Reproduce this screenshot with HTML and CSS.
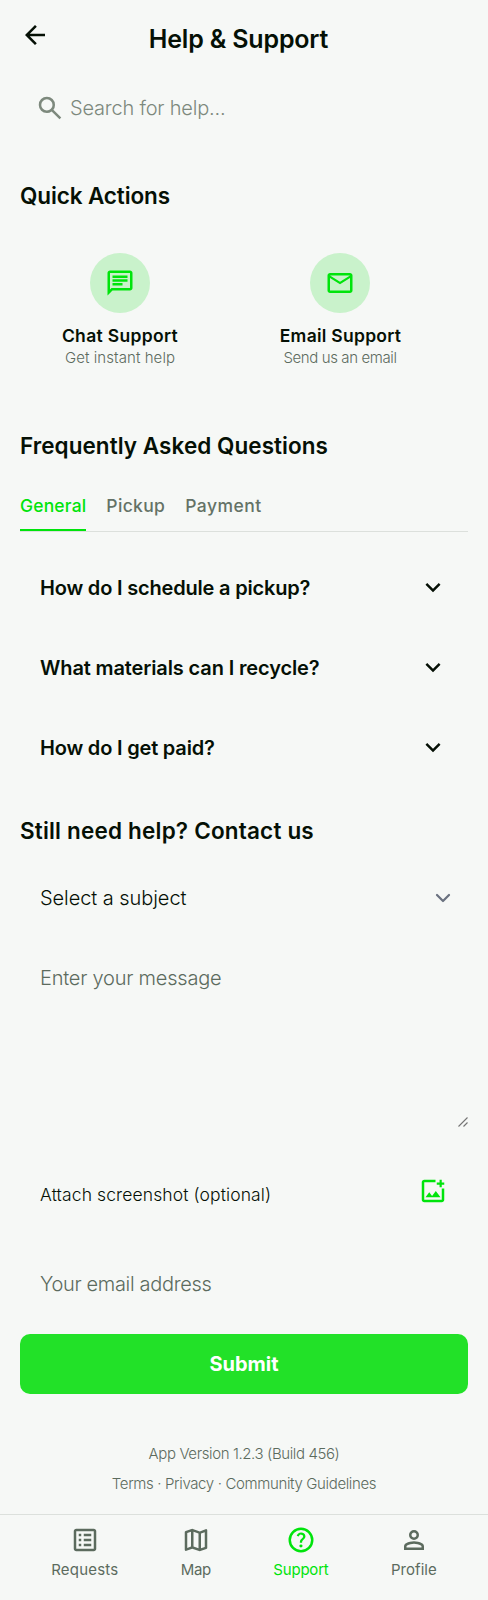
FILE: index.html
```html
<!DOCTYPE html>
<html lang="en">
<head>
<meta charset="utf-8">
<meta name="viewport" content="width=device-width, initial-scale=1">
<title>Help &amp; Support</title>
<link rel="stylesheet" href="styles.css">
</head>
<body>
<header class="header">
  <svg class="icon" viewBox="0 0 24 24"><path d="m7.85 13 5.6 5.6L12 20l-8-8 8-8 1.45 1.4L7.85 11H20v2z"/></svg>
  <h1 class="title">Help &amp; Support</h1>
</header>
<main class="main">
  <div class="search">
    <svg class="icon" viewBox="0 0 24 24"><path d="M19.6 21l-6.3-6.3A6.1 6.1 0 0 1 9.5 16q-2.73 0-4.61-1.89T3 9.5t1.89-4.61T9.5 3t4.61 1.89T16 9.5a6.1 6.1 0 0 1-1.3 3.8l6.3 6.3zM9.5 14q1.88 0 3.19-1.31T14 9.5t-1.31-3.19T9.5 5 6.31 6.31 5 9.5t1.31 3.19T9.5 14"/></svg>
    <span class="search-text">Search for help...</span>
  </div>

  <h2 class="heading quick">Quick Actions</h2>
  <div class="actions">
    <div class="action">
      <div class="bubble"><svg class="icon" viewBox="0 0 24 24"><path d="M6 14h8v-2H6zm0-3h12V9H6zm0-3h12V6H6zM2 22V4q0-.82.59-1.41T4 2h16q.82 0 1.41.59T22 4v12q0 .82-.59 1.41T20 18H6zm3.15-6H20V4H4v13.13z"/></svg></div>
      <div class="action-name">Chat Support</div>
      <div class="action-note">Get instant help</div>
    </div>
    <div class="action">
      <div class="bubble"><svg class="icon" viewBox="0 0 24 24"><path d="M4 20q-.82 0-1.41-.59T2 18V6q0-.82.59-1.41T4 4h16q.82 0 1.41.59T22 6v12q0 .82-.59 1.41T20 20zm8-7L4 8v10h16V8zm0-2 8-5H4zM4 8V6v12z"/></svg></div>
      <div class="action-name email-name">Email Support</div>
      <div class="action-note email-note">Send us an email</div>
    </div>
  </div>

  <h2 class="heading faq">Frequently Asked Questions</h2>
  <nav class="tabs">
    <a class="tab active">General</a>
    <a class="tab pickup">Pickup</a>
    <a class="tab payment">Payment</a>
  </nav>
  <div class="questions">
    <div class="question"><span>How do I schedule a pickup?</span><svg class="icon" viewBox="0 0 24 24"><path d="m12 15.4-6-6L7.4 8l4.6 4.6L16.6 8 18 9.4z"/></svg></div>
    <div class="question materials"><span>What materials can I recycle?</span><svg class="icon" viewBox="0 0 24 24"><path d="m12 15.4-6-6L7.4 8l4.6 4.6L16.6 8 18 9.4z"/></svg></div>
    <div class="question"><span>How do I get paid?</span><svg class="icon" viewBox="0 0 24 24"><path d="m12 15.4-6-6L7.4 8l4.6 4.6L16.6 8 18 9.4z"/></svg></div>
  </div>

  <h2 class="heading contact">Still need help? Contact us</h2>
  <form class="form">
    <div class="field select"><span>Select a subject</span><svg class="caret" viewBox="0 0 20 20"><path d="m6 8 4 4 4-4"/></svg></div>
    <div class="message-box">
      <textarea class="message" placeholder="Enter your message"></textarea>
      <svg class="grip" viewBox="0 0 10 10"><path d="M.5 9.5l9-9M5.5 9.5l4-4"/></svg>
    </div>
    <div class="attach">
      <span>Attach screenshot (optional)</span>
      <svg class="icon green" viewBox="0 0 24 24"><path d="M5 21q-.82 0-1.41-.59T3 19V5q0-.82.59-1.41T5 3h9v2H5v14h14v-9h2v9q0 .82-.59 1.41T19 21zM17.25 9V7H15V5.25h2.25V3H19v2.25h2V7h-2v2zM6 17h12l-3.75-5-3 4L9 13z"/></svg>
    </div>
    <div class="field email">Your email address</div>
    <button class="submit" type="button">Submit</button>
  </form>
</main>
<footer class="footer">
  <div class="version">App Version 1.2.3 (Build 456)</div>
  <div class="links">Terms · Privacy · Community Guidelines</div>
</footer>
<nav class="bottom-nav">
  <a class="nav-item requests"><svg class="icon" viewBox="0 0 24 24"><path d="M11 17h6v-2h-6zm0-4h6v-2h-6zm0-4h6V7h-6zM7 17h2v-2H7zm0-4h2v-2H7zm0-4h2V7H7zM5 21q-.82 0-1.41-.59T3 19V5q0-.82.59-1.41T5 3h14q.82 0 1.41.59T21 5v14q0 .82-.59 1.41T19 21zm0-2h14V5H5z"/></svg><span>Requests</span></a>
  <a class="nav-item map"><svg class="icon" viewBox="0 0 24 24"><path d="m15 21-6-2.1-4.65 1.8q-.5.2-.93-.11T3 19.75v-14q0-.33.19-.58T3.7 4.8L9 3l6 2.1 4.65-1.8q.5-.2.93.11t.42.84v14q0 .33-.19.58t-.51.37zm-1-2.45V6.85l-4-1.4v11.7zm2 0 3-1V5.7l-3 1.15zM5 18.3l3-1.15V5.45l-3 1z"/></svg><span>Map</span></a>
  <a class="nav-item current"><svg class="icon" viewBox="0 0 24 24"><path d="M11.95 18q.53 0 .89-.36t.36-.89-.36-.89-.89-.36-.89.36-.36.89.36.89.89.36m-.9-3.85h1.85q0-.82.19-1.3t1.06-1.3q.65-.65 1.03-1.24t.37-1.41q0-1.4-1.03-2.15T12.1 6q-1.42 0-2.31.75T8.55 8.55l1.65.65q.12-.45.56-.98T12.1 7.7q.8 0 1.2.44t.4.96q0 .5-.3.94t-.75.81q-1.1.98-1.35 1.48t-.25 1.82"/><circle class="ring" cx="12" cy="12" r="9"/></svg><span>Support</span></a>
  <a class="nav-item profile"><svg class="icon" viewBox="0 0 24 24"><path d="M12 12q-1.65 0-2.82-1.18T8 8t1.18-2.82T12 4t2.82 1.18T16 8t-1.18 2.82T12 12m-8 8v-2.8q0-.85.44-1.56T5.6 14.55q1.55-.77 3.15-1.16T12 13t3.25.39 3.15 1.16q.72.38 1.16 1.09T20 17.2V20zm2-2h12v-.8q0-.28-.14-.5t-.36-.35q-1.35-.67-2.72-1.01T12 15t-2.78.34T6.5 16.35q-.22.12-.36.35t-.14.5zm6-8q.82 0 1.41-.59T14 8t-.59-1.41T12 6t-1.41.59T10 8t.59 1.41T12 10"/></svg><span>Profile</span></a>
</nav>
</body>
</html>
```
FILE: styles.css
```css
* { box-sizing: border-box; }

body {
  margin: 0;
  height: 1600px;
  display: flex;
  flex-direction: column;
  background: #f6f8f6;
  color: #051005;
  font: 300 20px/30px Inter, "Liberation Sans", sans-serif;
  white-space: nowrap;
  overflow: hidden;
}

.icon {
  width: 30px;
  height: 30px;
  flex: none;
  display: block;
  fill: currentColor;
}

.green { color: #00e40c; }

.header {
  display: flex;
  height: 77.5px;
  padding: 20px 61px 0 20px;
}

.title {
  flex: 1;
  margin: 0;
  text-align: center;
  font-size: 25px;
  font-weight: 600;
  line-height: 39px;
  letter-spacing: -0.18px;
}

.main { padding: 0 20px; }

.search {
  display: flex;
  align-items: center;
  gap: 5px;
  height: 60px;
  padding-left: 15px;
  color: #7d897d;
  letter-spacing: -0.2px;
}

.heading {
  margin: 0;
  font-size: 22.5px;
  font-weight: 600;
  line-height: 28px;
}

.quick {
  padding-top: 44.5px;
  letter-spacing: -0.12px;
}

.actions {
  display: flex;
  gap: 20px;
  padding-top: 23px;
}

.action {
  width: 200px;
  height: 160px;
  padding-top: 20px;
  text-align: center;
}

.bubble {
  display: flex;
  align-items: center;
  justify-content: center;
  width: 60px;
  height: 60px;
  margin: 0 auto 10px;
  border-radius: 50%;
  background: #c9f2cb;
  color: #00e40c;
}

.action-name {
  font-size: 17.5px;
  font-weight: 600;
  line-height: 26px;
  letter-spacing: 0.33px;
}

.email-name { letter-spacing: 0.27px; padding-left: 1px; }

.action-note {
  font-size: 15px;
  line-height: 18px;
  letter-spacing: 0.07px;
  color: #5c6b5e;
}

.email-note { letter-spacing: -0.39px; }

.faq {
  padding-top: 38.5px;
  letter-spacing: 0.05px;
}

.tabs {
  display: flex;
  gap: 20px;
  height: 72px;
  padding-top: 32.5px;
  border-bottom: 1px solid #dce0dc;
}

.tab {
  height: 38.5px;
  font-size: 17.5px;
  font-weight: 500;
  line-height: 27px;
  letter-spacing: 0.16px;
  color: #647266;
}

.tab.active {
  border-bottom: 2.5px solid #00e40c;
  color: #00e40c;
}

.pickup { letter-spacing: 0.33px; }
.payment { letter-spacing: 0.48px; }

.questions {
  display: grid;
  gap: 20px;
  padding-top: 26px;
}

.question {
  display: flex;
  align-items: center;
  justify-content: space-between;
  height: 60px;
  padding: 0 20px;
  font-weight: 600;
  letter-spacing: -0.19px;
}

.materials { letter-spacing: -0.13px; }

.contact {
  padding-top: 39px;
  letter-spacing: 0.19px;
}

.form {
  display: flex;
  flex-direction: column;
  gap: 20px;
  padding-top: 23px;
}

.field {
  display: flex;
  align-items: center;
  justify-content: space-between;
  height: 60px;
  padding: 0 10px 0 20px;
}

.select { letter-spacing: -0.065px; }

.caret {
  width: 30px;
  height: 30px;
  fill: none;
  stroke: #6b7280;
  stroke-width: 1.5;
  stroke-linecap: round;
  stroke-linejoin: round;
}

.message-box { position: relative; }

.message {
  display: block;
  width: 448px;
  height: 180px;
  padding: 15px 20px;
  border: 0;
  background: transparent;
  font: inherit;
  letter-spacing: -0.222px;
  resize: none;
}

.message::placeholder { color: #5c6b5e; opacity: 1; }

.grip {
  position: absolute;
  right: 0.5px;
  bottom: 0.5px;
  width: 10px;
  height: 10px;
  fill: none;
  stroke: #747474;
  stroke-width: 1.1;
}

.attach {
  display: flex;
  align-items: center;
  justify-content: space-between;
  height: 86px;
  padding: 0 20px;
  font-size: 17.5px;
  letter-spacing: 0.11px;
}

.attach span { padding-top: 8px; }

.email {
  color: #5c6b5e;
  letter-spacing: -0.33px;
}

.submit {
  height: 60px;
  padding: 0;
  border: 0;
  border-radius: 10px;
  background: #22e128;
  color: #fff;
  font: inherit;
  font-weight: 700;
  letter-spacing: -0.03px;
}

.footer {
  padding-top: 45px;
  text-align: center;
  font-size: 15px;
  color: #5c6b5e;
}

.version { letter-spacing: -0.388px; }
.links { letter-spacing: -0.361px; }

.bottom-nav {
  display: flex;
  justify-content: space-around;
  height: 86px;
  margin-top: auto;
  padding: 10px 20px 0;
  border-top: 1px solid #dce0dc;
}

.nav-item {
  display: flex;
  flex-direction: column;
  align-items: center;
  font-size: 15px;
  font-weight: 400;
  color: #5c6b5e;
}

.current { color: #00e40c; letter-spacing: -0.206px; }
.requests { letter-spacing: 0.192px; }
.map { letter-spacing: -0.3px; }
.profile { letter-spacing: 0.05px; }

.ring {
  fill: none;
  stroke: currentColor;
  stroke-width: 2;
}
```
